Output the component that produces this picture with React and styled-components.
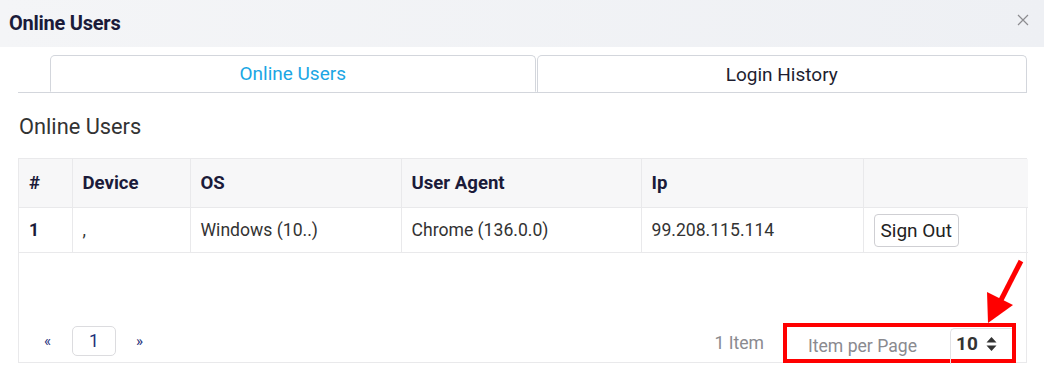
import React from "react";
import styled, { createGlobalStyle } from "styled-components";

const Global = createGlobalStyle`
  html, body { margin: 0; padding: 0; background: #fff; }
  body { font-family: Roboto, "Liberation Sans", Arial, sans-serif; }
  * { box-sizing: border-box; }
`;

const Modal = styled.div`
  position: relative;
  width: 1044px;
  height: 370px;
  background: #fff;
  overflow: hidden;
`;

const Header = styled.div`
  height: 47px;
  display: flex;
  align-items: center;
  justify-content: space-between;
  padding: 0 14px 2px 9px;
  background: linear-gradient(90deg, #f4f5f7 0%, #eef0f4 100%);
`;

const Title = styled.h1`
  margin: 0;
  font-size: 20px;
  font-weight: 700;
  color: #1b1b3a;
  letter-spacing: -0.25px;
`;

const Close = styled.button`
  border: 0;
  background: none;
  padding: 0;
  width: 14px;
  height: 14px;
  display: flex;
  align-items: center;
  justify-content: center;
  margin-top: -6px;
`;

const Body = styled.div`
  padding: 8px 17px 0 18px;
`;

const TabBar = styled.div`
  display: flex;
  padding-left: 32px;
  border-bottom: 1px solid #d3d6dc;
  gap: 1px;
`;

const Tab = styled.div`
  width: ${(p) => p.$w}px;
  height: 37px;
  display: flex;
  align-items: center;
  justify-content: center;
  font-size: 19px;
  color: ${(p) => (p.$active ? "#1aa6e4" : "#1e1e30")};
  border: 1px solid #d3d6dc;
  border-bottom: ${(p) => (p.$active ? "1px solid #fff" : "0")};
  margin-bottom: ${(p) => (p.$active ? "-1px" : "0")};
  border-radius: 5px 5px 0 0;
  background: #fff;
`;

const SectionTitle = styled.h2`
  margin: 0;
  padding: 21px 0 0 1px;
  height: 65px;
  font-size: 21.8px;
  font-weight: 400;
  color: #333;
`;

const TableBox = styled.div`
  border: 1px solid #e9e9eb;
  height: 205px;
  display: flex;
  flex-direction: column;
  justify-content: space-between;
`;

const Table = styled.table`
  width: 100%;
  border-collapse: collapse;
  table-layout: fixed;
`;

const Th = styled.th`
  height: 48px;
  background: #f7f7f8;
  text-align: left;
  font-size: 18.6px;
  font-weight: 700;
  color: #1b1b3a;
  padding: 0 10px;
  border-left: 1px solid #e9e9eb;
  border-bottom: 1px solid #e9e9eb;
  &:first-child { border-left: 0; }
`;

const Td = styled.td`
  height: 45px;
  font-size: 17.6px;
  font-weight: ${(p) => (p.$bold ? 700 : 400)};
  color: ${(p) => (p.$bold ? "#1b1b3a" : "#333")};
  padding: 0 10px;
  border-left: 1px solid #e9e9eb;
  border-bottom: 1px solid #e9e9eb;
  &:first-child { border-left: 0; }
`;

const SignOut = styled.button`
  font-family: inherit;
  font-size: 19px;
  color: #222;
  background: #fff;
  border: 1px solid #cfcfd3;
  border-radius: 4px;
  height: 33px;
  padding: 0 6px;
  margin-top: 1px;
`;

const Footer = styled.div`
  display: flex;
  align-items: center;
  justify-content: space-between;
  padding: 0 10px 5px 25px;
`;

const Pager = styled.div`
  display: flex;
  align-items: center;
  gap: 20px;
  margin-top: 2px;
`;

const PageArrow = styled.span`
  font-size: 15px;
  color: #1d2f7a;
  width: 8px;
`;

const PageNum = styled.span`
  width: 44px;
  height: 30px;
  border: 1px solid #dcdcdf;
  border-radius: 5px;
  display: flex;
  align-items: center;
  justify-content: center;
  font-size: 17.6px;
  color: #1d2f7a;
`;

const Right = styled.div`
  display: flex;
  align-items: center;
  gap: 19px;
`;

const Muted = styled.span`
  font-size: 17.6px;
  color: #8a8a8f;
  padding-top: 6px;
`;

const Highlight = styled.div`
  width: 233px;
  height: 40px;
  border: 4px solid #ff0000;
  display: flex;
  align-items: center;
  justify-content: space-between;
  padding: 0 0 0 21px;
  margin-bottom: -6px;
`;

const Select = styled.div`
  width: 62px;
  height: 36px;
  margin-top: 6px;
  border: 1px solid #e2e2e5;
  border-right: 0;
  border-bottom: 0;
  border-radius: 5px 0 0 0;
  display: flex;
  align-items: center;
  gap: 8px;
  padding: 0 0 6px 5px;
  font-size: 19px;
  font-weight: 700;
  color: #333;
`;

const Arrow = styled.svg`
  position: absolute;
  left: 980px;
  top: 255px;
`;

const cols = [53, 118, 211, 240, 222, 165];

export default function App() {
  return (
    <Modal>
      <Global />
      <Header>
        <Title>Online Users</Title>
        <Close aria-label="close">
          <svg width="12" height="12" viewBox="0 0 12 12">
            <path d="M1 1L11 11M11 1L1 11" stroke="#8c8c90" strokeWidth="1.2" />
          </svg>
        </Close>
      </Header>
      <Body>
        <TabBar>
          <Tab $active $w={486}>Online Users</Tab>
          <Tab $w={491}>Login History</Tab>
        </TabBar>
        <SectionTitle>Online Users</SectionTitle>
        <TableBox>
          <Table>
            <colgroup>
              {cols.map((w, i) => (
                <col key={i} style={{ width: w }} />
              ))}
            </colgroup>
            <thead>
              <tr>
                <Th>#</Th>
                <Th>Device</Th>
                <Th>OS</Th>
                <Th>User Agent</Th>
                <Th>Ip</Th>
                <Th></Th>
              </tr>
            </thead>
            <tbody>
              <tr>
                <Td $bold>1</Td>
                <Td>,</Td>
                <Td>Windows (10..)</Td>
                <Td>Chrome (136.0.0)</Td>
                <Td>99.208.115.114</Td>
                <Td>
                  <SignOut>Sign Out</SignOut>
                </Td>
              </tr>
            </tbody>
          </Table>
          <Footer>
            <Pager>
              <PageArrow>«</PageArrow>
              <PageNum>1</PageNum>
              <PageArrow>»</PageArrow>
            </Pager>
            <Right>
              <Muted>1 Item</Muted>
              <Highlight>
                <Muted>Item per Page</Muted>
                <Select>
                  10
                  <svg width="11" height="16" viewBox="0 0 11 16">
                    <path d="M5.5 1L10.5 6.5H0.5Z M5.5 15L10.5 9.5H0.5Z" fill="#333" />
                  </svg>
                </Select>
              </Highlight>
            </Right>
          </Footer>
        </TableBox>
      </Body>
      <Arrow width="50" height="75" viewBox="980 255 50 75">
        <line x1="1021" y1="261" x2="1000" y2="302" stroke="#ff0000" strokeWidth="5" />
        <polygon points="988,323 987,292 1013,305" fill="#ff0000" />
      </Arrow>
    </Modal>
  );
}
